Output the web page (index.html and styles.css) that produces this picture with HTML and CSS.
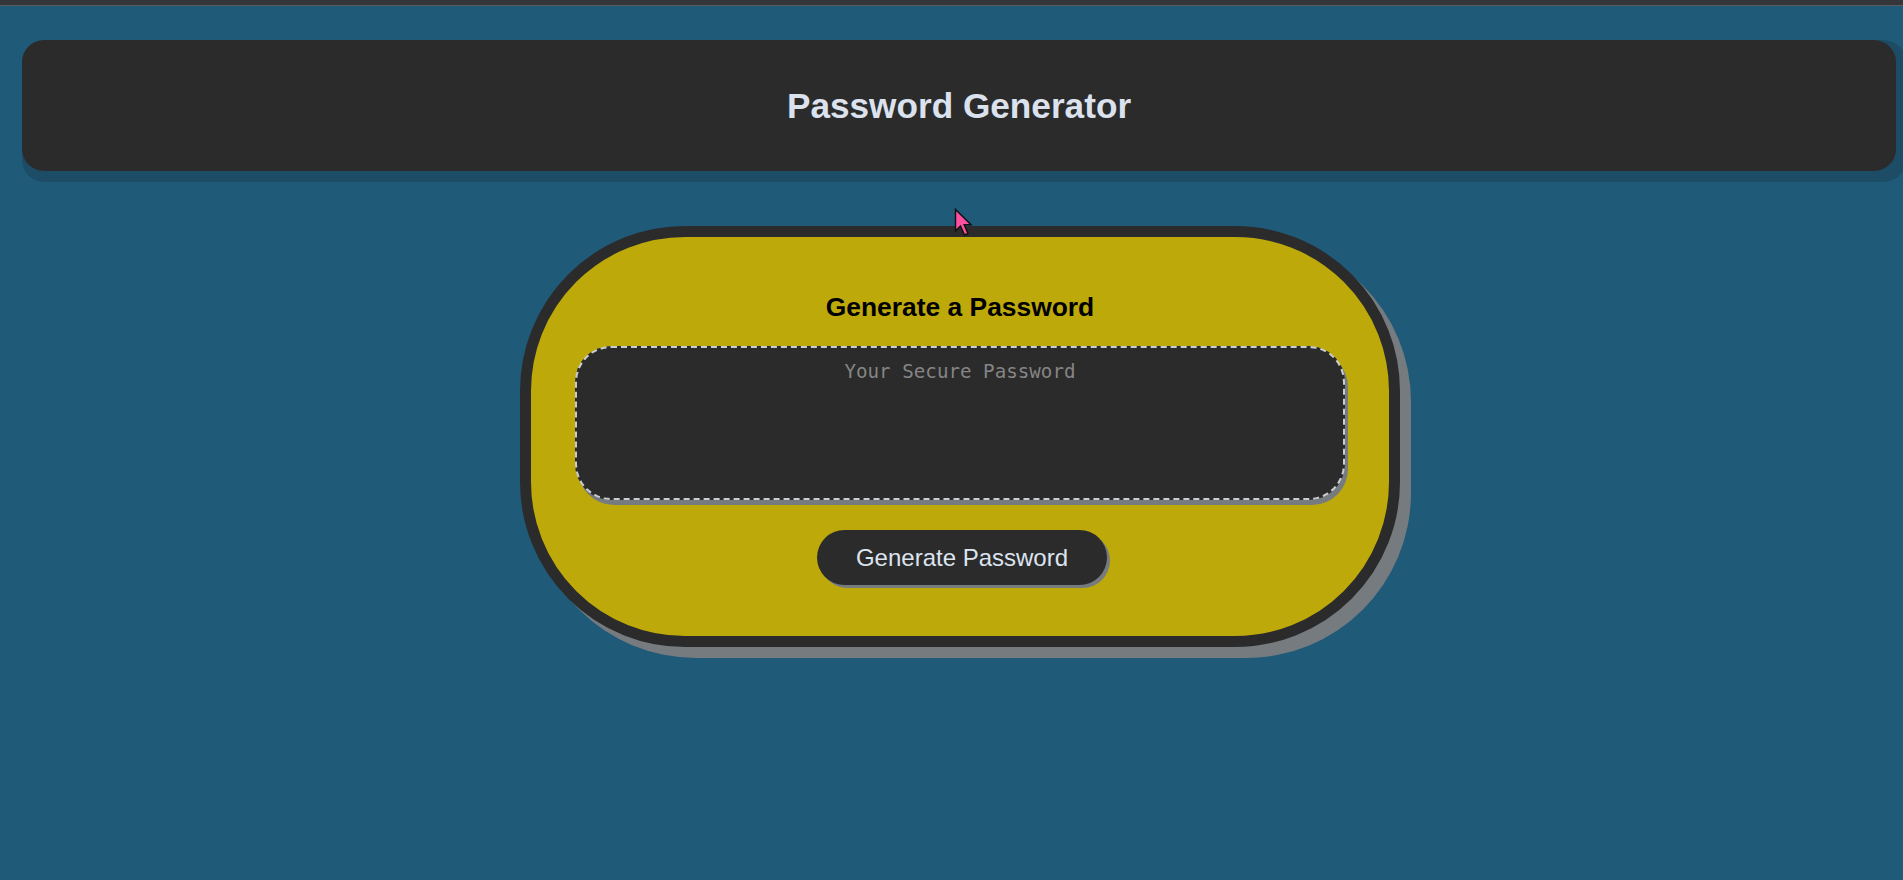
FILE: index.html
```html
<!DOCTYPE html>
<html lang="en">
<head>
<meta charset="utf-8">
<title>Password Generator</title>
<link rel="stylesheet" href="styles.css">
</head>
<body>
<div class="topstrip"></div>
<header class="site-header">
  <h1 class="site-title">Password Generator</h1>
</header>
<main class="card">
  <h2 class="card-title">Generate a Password</h2>
  <textarea class="password" readonly placeholder="Your Secure Password" aria-label="Generated Password"></textarea>
  <button class="btn" type="button">Generate Password</button>
</main>
<svg class="cursor" width="19" height="29" viewBox="0 0 19 29" aria-hidden="true">
  <path d="M1.5 1.5 L1.5 23 L6.5 18 L10.5 27 L14 25.5 L10.2 16.8 L17 16.8 Z" fill="#ff4fa3" stroke="#111" stroke-width="1.5" stroke-linejoin="miter"/>
</svg>
</body>
</html>
```
FILE: styles.css
```css
*, *::before, *::after { box-sizing: border-box; }

html {
  margin: 0;
  padding: 0;
  overflow: hidden;
}

body {
  margin: 0;
  padding: 0;
  width: 1920px;
  min-height: 880px;
  background: #1f5b78;
  font-family: "Liberation Sans", Arial, sans-serif;
  position: relative;
}

.topstrip {
  height: 6px;
  background: #35363a;
  border-bottom: 1px solid #5b5c60;
}

.site-header {
  margin: 34px 24px 0 22px;
  height: 131px;
  background: #2b2b2b;
  border-radius: 22px;
  box-shadow: 10px 0 0 #1d4d66, 0 11px 0 #1d4d66, 10px 11px 0 #1d4d66;
  display: flex;
  align-items: center;
  justify-content: center;
}

.site-title {
  margin: 0;
  font-size: 35.2px;
  font-weight: 700;
  color: #dbe2ee;
  line-height: 40px;
}

.card {
  width: 880px;
  margin: 55px auto 0;
  padding: 55px 0 51px;
  background: #bea90b;
  border: 11px solid #2b2b2b;
  border-radius: 165px;
  box-shadow: 11px 11px 0 #767b80;
  display: flex;
  flex-direction: column;
  align-items: center;
}

.card-title {
  margin: 0;
  font-size: 26.4px;
  line-height: 30px;
  font-weight: 700;
  color: #000;
}

.password {
  display: block;
  width: 770px;
  height: 154px;
  margin: 24px 0 0;
  padding: 12px 15px 0;
  background: #2b2b2b;
  border: 2px dashed #c9cdd3;
  border-radius: 36px;
  box-shadow: 3px 5px 0 #767b80;
  font-family: "DejaVu Sans Mono", monospace;
  font-size: 19.2px;
  color: #dde4ef;
  text-align: center;
  resize: none;
  overflow: hidden;
  outline: none;
  appearance: none;
}

.password::placeholder {
  color: #858585;
  opacity: 1;
}

.btn {
  margin-top: 30px;
  margin-left: 4px;
  border: none;
  background: #2b2b2b;
  color: #dde4ef;
  font-family: "Liberation Sans", Arial, sans-serif;
  font-size: 24px;
  line-height: 24px;
  padding: 15.5px 38.5px;
  border-radius: 28px;
  box-shadow: 3px 3px 0 #767b80;
  cursor: pointer;
}

.cursor {
  position: absolute;
  left: 954px;
  top: 208px;
}
```
